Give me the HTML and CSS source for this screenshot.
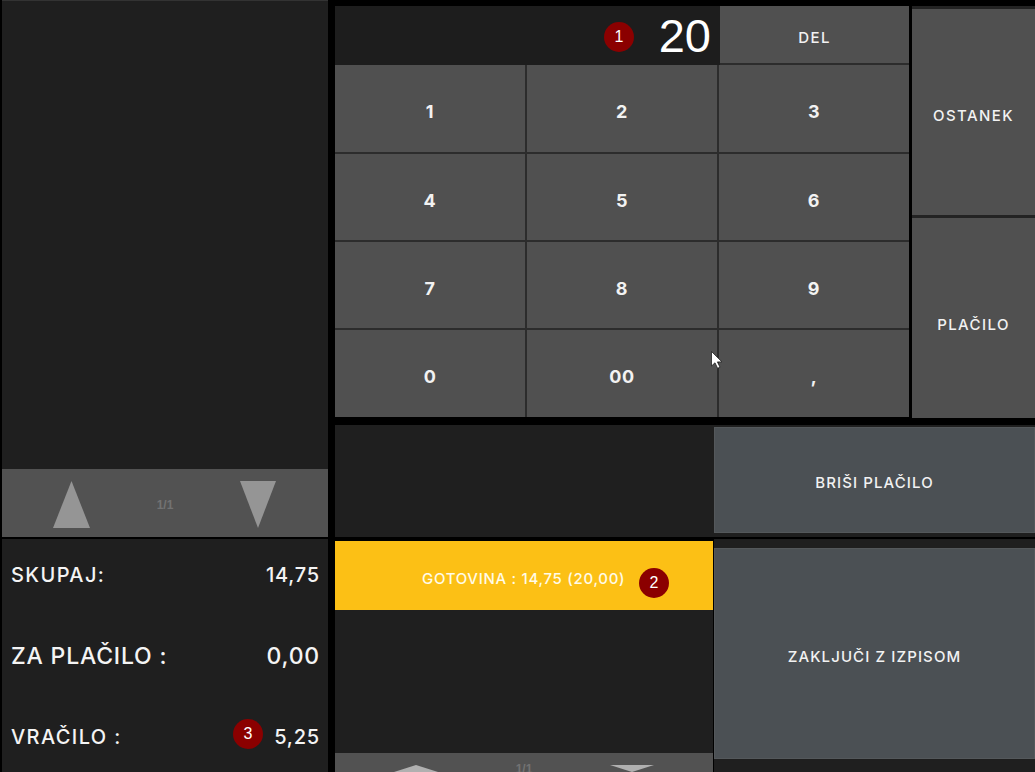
FILE: index.html
```html
<!DOCTYPE html>
<html lang="sl">

<head>
    <meta charset="UTF-8">
    <meta name="viewport" content="width=device-width, initial-scale=1.0">
    <title>Plačilo</title>
    <link rel="stylesheet" href="styles.css">
</head>

<body>

    <div class="screen">

        <div class="left">
            <div class="list"></div>
            <div class="pager">
                <svg class="arrow" width="37" height="47" viewBox="0 0 37 47"><polygon points="18.5,0 37,47 0,47" /></svg>
                <span class="pageNo">1/1</span>
                <svg class="arrow" width="37" height="47" viewBox="0 0 37 47"><polygon points="0,0 36,0 18,47" /></svg>
            </div>
            <div class="summary">
                <div class="sumRow first"><span>SKUPAJ:</span><span class="val">14,75</span></div>
                <div class="sumRow big"><span>ZA PLAČILO :</span><span class="val">0,00</span></div>
                <div class="sumRow last"><span>VRAČILO :</span><span class="val">5,25</span><span class="badge badge3">3</span></div>
            </div>
        </div>

        <div class="right">

            <div class="entry">
                <div class="keypad">
                    <div class="display">
                        <span class="badge badge1">1</span>
                        <span class="amount">20</span>
                        <button class="key del">DEL</button>
                    </div>
                    <div class="keys">
                        <button class="key num">1</button>
                        <button class="key num">2</button>
                        <button class="key num">3</button>
                        <button class="key num">4</button>
                        <button class="key num">5</button>
                        <button class="key num">6</button>
                        <button class="key num">7</button>
                        <button class="key num">8</button>
                        <button class="key num">9</button>
                        <button class="key num">0</button>
                        <button class="key num">00</button>
                        <button class="key num">,</button>
                    </div>
                </div>
                <div class="side">
                    <button class="key sideKey">OSTANEK</button>
                    <button class="key sideKey">PLAČILO</button>
                </div>
            </div>

            <div class="middle">
                <div class="midEmpty"></div>
                <div class="midAction"><button class="action">BRIŠI PLAČILO</button></div>
            </div>

            <div class="lower">
                <div class="payments">
                    <div class="payment">
                        <span>GOTOVINA : 14,75 (20,00)</span>
                        <span class="badge badge2">2</span>
                    </div>
                    <div class="payPager">
                        <svg width="44" height="19" viewBox="0 0 44 19"><polygon points="22,0 44,7 44,19 0,19 0,7" /></svg>
                        <span class="pageNo">1/1</span>
                        <svg width="44" height="19" viewBox="0 0 44 19"><polygon points="0,0 44,0 22,7" /></svg>
                    </div>
                </div>
                <div class="finish"><button class="action">ZAKLJUČI Z IZPISOM</button></div>
            </div>

        </div>
    </div>

    <!-- mouse cursor -->
    <svg class="cursor" width="12" height="18" viewBox="0 0 12 18"><path d="M0.5 0.5V15L4 11.8L6.6 17.3L9 16.2L6.4 10.9H11Z" /></svg>

</body>

</html>
```

FILE: styles.css
```css
* {
    box-sizing: border-box;
}

body {
    margin: 0;
    width: 1035px;
    height: 772px;
    overflow: hidden;
    background-color: #000;
    font-family: Inter, "Liberation Sans", sans-serif;
    color: #fff;
}

button {
    font-family: inherit;
    color: inherit;
    border: 0;
    padding: 0;
}

.screen {
    display: grid;
    grid-template-columns: 326px 700px;
    column-gap: 7px;
    height: 772px;
    padding-left: 2px;
}

/* left column */
.left {
    display: flex;
    flex-direction: column;
}

.list {
    height: 469px;
    background-color: #1f1f1f;
    border-top: 1px solid #333;
}

.pager {
    height: 68px;
    background-color: #525252;
    display: flex;
    align-items: center;
    justify-content: space-between;
    padding: 2px 51px 0 51px;
}

.arrow {
    fill: #959595;
}

.pageNo {
    font-family: "Liberation Sans", sans-serif;
    font-size: 12px;
    font-weight: bold;
    color: #727272;
}

.pager .pageNo {
    margin-top: 2px;
}

.summary {
    flex: 1;
    margin-top: 2px;
    background-color: #1f1f1f;
    padding: 0 8px 0 9px;
    position: relative;
}

.sumRow {
    display: flex;
    justify-content: space-between;
    align-items: center;
    font-size: 20px;
    font-weight: 500;
    letter-spacing: 1.4px;
    color: #f4f4f4;
}

.sumRow .val {
    letter-spacing: 0.8px;
}

.sumRow.first {
    height: 72px;
}

.sumRow.big {
    height: 90px;
    font-size: 23px;
    letter-spacing: 0.8px;
}

.sumRow.last {
    height: 71px;
}

/* red numbered markers */
.badge {
    position: absolute;
    width: 30px;
    height: 30px;
    border-radius: 50%;
    background-color: #8b0000;
    font-family: "Liberation Sans", sans-serif;
    font-size: 16px;
    line-height: 30px;
    text-align: center;
    color: #fff;
    letter-spacing: 0;
    font-weight: normal;
}

.badge1 {
    left: 269px;
    top: 16px;
}

.badge2 {
    left: 304px;
    top: 27px;
}

.badge3 {
    left: 231px;
    top: 180px;
}

/* right column */
.right {
    display: flex;
    flex-direction: column;
    padding-top: 6px;
}

.entry {
    display: grid;
    grid-template-columns: 575px 123px;
    column-gap: 2px;
    height: 412px;
}

.keypad {
    display: flex;
    flex-direction: column;
    padding-bottom: 1px;
}

.display {
    position: relative;
    width: 574px;
    height: 59px;
    background-color: #1d1d1d;
    display: flex;
    justify-content: flex-end;
    align-items: center;
}

.amount {
    font-family: "Liberation Sans", sans-serif;
    font-size: 47px;
    margin-right: 9px;
    color: #fff;
}

.key {
    background-color: #505050;
    display: flex;
    align-items: center;
    justify-content: center;
    font-weight: 500;
    font-size: 15px;
    letter-spacing: 1.4px;
    color: #f2f2f2;
}

.del {
    width: 189px;
    height: 59px;
    padding-top: 6px;
    border-bottom: 2px solid #2c2c2c;
}

.keys {
    flex: 1;
    width: 574px;
    display: grid;
    grid-template-columns: 190px 190px 190px;
    grid-template-rows: 87px 86px 86px 87px;
    gap: 2px;
    background-color: #2c2c2c;
}

.num {
    font-size: 18px;
    font-weight: 700;
    letter-spacing: 0.6px;
    padding-top: 6px;
}

.side {
    display: flex;
    flex-direction: column;
    padding-top: 3px;
    gap: 3px;
    background-color: #232323;
}

.sideKey:first-child {
    height: 206px;
    padding-top: 6px;
}

.sideKey:last-child {
    height: 200px;
    padding-top: 12px;
}

.middle {
    display: grid;
    grid-template-columns: 378px 322px;
    height: 112px;
    margin-top: 7px;
    background-color: #1f1f1f;
}

.midAction {
    padding: 2px 0 4px 1px;
    display: flex;
}

.action {
    flex: 1;
    background-color: #4b5054;
    border: 1px solid #54585b;
    font-size: 15px;
    font-weight: 500;
    letter-spacing: 1.1px;
    color: #f2f2f2;
    padding-top: 4px;
}

.lower {
    flex: 1;
    display: grid;
    grid-template-columns: 378px 322px;
    margin-top: 2px;
}

.payments {
    position: relative;
    display: flex;
    flex-direction: column;
    justify-content: space-between;
    margin-top: 2px;
    background-color: #1f1f1f;
}

.payment {
    position: relative;
    height: 69px;
    background-color: #fcc015;
    display: flex;
    align-items: center;
    padding: 0 0 0 87px;
    font-size: 15px;
    font-weight: 500;
    letter-spacing: 0.7px;
    color: #fffbe8;
}

.payment span:first-child {
    margin-top: 6px;
}

.payPager {
    height: 19px;
    background-color: #525252;
    display: flex;
    justify-content: space-between;
    align-items: flex-start;
    padding: 12px 59px 0 59px;
    overflow: hidden;
}

.payPager svg {
    fill: #b0b0b0;
    flex: none;
}

.payPager .pageNo {
    margin-top: -3px;
}

.finish {
    margin-left: 1px;
    padding: 9px 0 13px;
    background-color: #1f1f1f;
    display: flex;
}

.finish .action {
    padding-top: 6px;
}

.cursor {
    position: absolute;
    left: 711px;
    top: 351px;
    fill: #fff;
    stroke: #222;
    stroke-width: 0.8;
}
```
